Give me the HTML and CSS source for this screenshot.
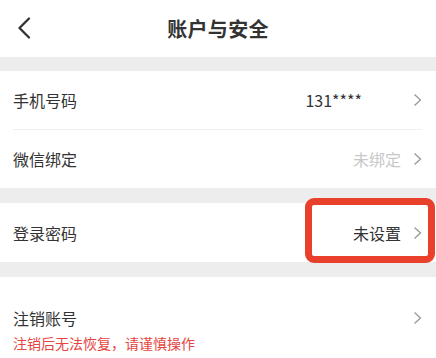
FILE: index.html
```html
<!DOCTYPE html>
<html lang="zh-CN">
<head>
<meta charset="utf-8">
<link rel="stylesheet" href="styles.css">
</head>
<body>
<div class="page">
  <header class="topbar">
    <span class="back">
      <svg width="14" height="22" viewBox="0 0 14 22"><polyline points="12,1.5 2.5,11 12,20.5" fill="none" stroke="#333" stroke-width="2.3" stroke-linecap="round" stroke-linejoin="round"/></svg>
    </span>
    <h1 class="title">账户与安全</h1>
  </header>
  <div class="gap"></div>
  <section class="group">
    <div class="row">
      <span class="label">手机号码</span>
      <span class="value phone">131****</span>
      <svg class="chev" width="9" height="14" viewBox="0 0 9 14"><polyline points="1.5,1.5 7.5,7 1.5,12.5" fill="none" stroke="#999" stroke-width="1.3"/></svg>
    </div>
    <div class="divider"></div>
    <div class="row">
      <span class="label">微信绑定</span>
      <span class="value muted">未绑定</span>
      <svg class="chev" width="9" height="14" viewBox="0 0 9 14"><polyline points="1.5,1.5 7.5,7 1.5,12.5" fill="none" stroke="#999" stroke-width="1.3"/></svg>
    </div>
  </section>
  <div class="gap gap15"></div>
  <section class="group">
    <div class="row row-tall highlight-host">
      <span class="label">登录密码</span>
      <span class="value">未设置</span>
      <svg class="chev" width="9" height="14" viewBox="0 0 9 14"><polyline points="1.5,1.5 7.5,7 1.5,12.5" fill="none" stroke="#999" stroke-width="1.3"/></svg>
      <div class="highlight"></div>
    </div>
  </section>
  <div class="gap gap15"></div>
  <section class="group cancel">
    <div class="cancel-line">
      <span class="label">注销账号</span>
      <svg class="chev" width="9" height="14" viewBox="0 0 9 14"><polyline points="1.5,1.5 7.5,7 1.5,12.5" fill="none" stroke="#999" stroke-width="1.3"/></svg>
    </div>
    <div class="warn">注销后无法恢复，请谨慎操作</div>
  </section>
</div>
</body>
</html>
```

FILE: styles.css
```css
* { box-sizing: border-box; }
html, body {
  margin: 0;
  padding: 0;
  background: #fff;
}
body {
  font-family: "Noto Sans CJK SC", "Noto Sans", sans-serif;
  color: #333;
  width: 436px;
  height: 358px;
  overflow: hidden;
}
.page { display: flex; flex-direction: column; }
.topbar {
  height: 57px;
  display: flex;
  align-items: center;
  justify-content: center;
  position: relative;
}
.back {
  position: absolute;
  left: 17px;
  top: 17px;
  display: flex;
}
.title {
  margin: 0;
  font-size: 20px;
  font-weight: 700;
  color: #333;
  line-height: 1;
  letter-spacing: 0.3px;
  margin-top: 0px;
}
.gap { height: 14px; background: #ededed; }
.gap15 { height: 15px; }
.group { background: #fff; }
.row {
  height: 58px;
  display: flex;
  align-items: center;
  padding: 0 14px 0 13px;
  font-size: 16px;
}
.row-tall { height: 59px; }
.label { flex: 1; color: #333; }
.value { color: #333; margin-right: 12px; }
.value.phone { margin-right: 51px; }
.value.muted { color: #c8c8c8; }
.chev { display: block; }
.divider {
  height: 1px;
  background: #efefef;
  margin: 0 14px 0 13px;
}
.highlight-host { position: relative; }
.highlight {
  position: absolute;
  left: 305px;
  top: -5px;
  width: 130px;
  height: 65px;
  border: 7px solid #e8402b;
  border-radius: 9px;
}
.cancel {
  padding: 30px 14px 0 13px;
  height: 81px;
}
.cancel-line {
  display: flex;
  align-items: center;
  font-size: 16px;
  height: 22px;
}
.warn {
  margin-top: 4px;
  font-size: 14px;
  line-height: 20px;
  color: #e5443f;
}
```
